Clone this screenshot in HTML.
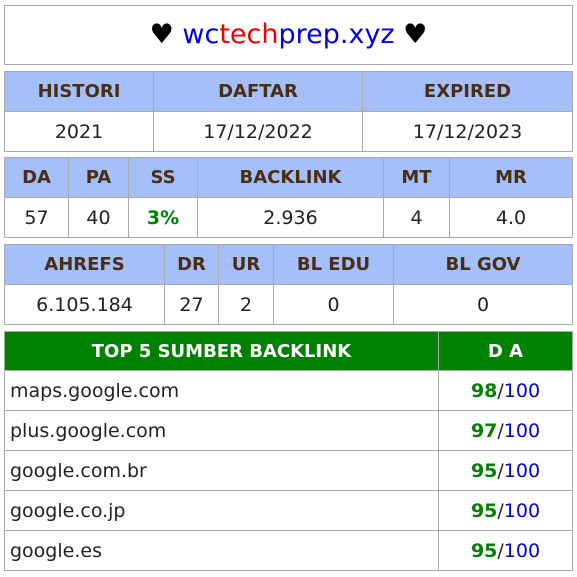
<!DOCTYPE html>
<html><head><meta charset="utf-8"><style>
*{margin:0;padding:0;box-sizing:border-box}
body{width:577px;height:577px;background:#fff;font-family:"DejaVu Sans","Liberation Sans",sans-serif;position:relative;overflow:hidden;color:#222}
.b{position:absolute;border:1px solid #aaa}
table{position:absolute;border-collapse:collapse;table-layout:fixed}
td{border:1px solid #aaa;text-align:center;font-size:19px;height:40px;padding:0}
th{border:1px solid #aaa;background:#a4bff9;color:#4a2e14;font-size:18px;font-weight:bold;height:40px;padding:0}
.g{color:#008000;font-weight:bold}
.bl{color:#0000e0}
.t4 th{background:#008000;color:#fff}
.t4 td.l{text-align:left;padding-left:5px;font-size:19px}
</style></head><body>
<div class="b" style="left:4px;top:5px;width:569px;height:60px;text-align:center;font-size:27px;line-height:58px;color:#000">♥ <span style="color:#0000e0">wc</span><span style="color:#e00">tech</span><span style="color:#0000e0">prep.xyz</span> ♥</div>
<table style="left:4px;top:71px;width:569px">
<col style="width:149px"><col style="width:209px"><col>
<tr><th>HISTORI</th><th>DAFTAR</th><th>EXPIRED</th></tr>
<tr><td>2021</td><td>17/12/2022</td><td>17/12/2023</td></tr></table>
<table style="left:4px;top:157px;width:569px">
<col style="width:64px"><col style="width:60px"><col style="width:69px"><col style="width:186px"><col style="width:66px"><col>
<tr><th>DA</th><th>PA</th><th>SS</th><th>BACKLINK</th><th>MT</th><th>MR</th></tr>
<tr><td>57</td><td>40</td><td class="g">3%</td><td>2.936</td><td>4</td><td>4.0</td></tr></table>
<table style="left:4px;top:244px;width:569px">
<col style="width:160px"><col style="width:54px"><col style="width:55px"><col style="width:120px"><col>
<tr><th>AHREFS</th><th>DR</th><th>UR</th><th>BL EDU</th><th>BL GOV</th></tr>
<tr><td>6.105.184</td><td>27</td><td>2</td><td>0</td><td>0</td></tr></table>
<table class="t4" style="left:4px;top:331px;width:569px">
<col style="width:434px"><col>
<tr><th style="height:39px">TOP 5 SUMBER BACKLINK</th><th style="height:39px">D A</th></tr>
<tr><td class="l">maps.google.com</td><td><span class="g">98</span>/<span class="bl">100</span></td></tr>
<tr><td class="l">plus.google.com</td><td><span class="g">97</span>/<span class="bl">100</span></td></tr>
<tr><td class="l">google.com.br</td><td><span class="g">95</span>/<span class="bl">100</span></td></tr>
<tr><td class="l">google.co.jp</td><td><span class="g">95</span>/<span class="bl">100</span></td></tr>
<tr><td class="l">google.es</td><td><span class="g">95</span>/<span class="bl">100</span></td></tr>
</table>
</body></html>
